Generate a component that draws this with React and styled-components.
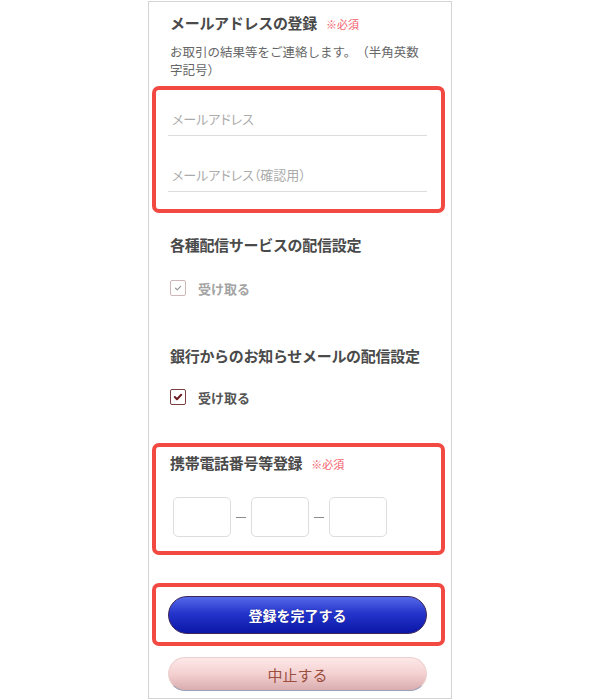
import React from "react";
import styled, { createGlobalStyle } from "styled-components";

const Global = createGlobalStyle`
  html, body { margin: 0; padding: 0; background: #fff; }
  body {
    font-family: "Noto Sans CJK JP", "Noto Sans", sans-serif;
    text-spacing-trim: space-all;
  }
  * { box-sizing: border-box; }
`;

const Page = styled.div`
  width: 600px;
  height: 700px;
  display: flex;
  justify-content: center;
  align-items: flex-start;
  padding-top: 1px;
  overflow: hidden;
`;

const Panel = styled.div`
  width: 304px;
  border: 1px solid #d4d4d4;
  padding: 0 6px 7px 3px;
  display: flex;
  flex-direction: column;
`;

const Box = styled.section`
  border-style: solid;
  border-color: ${(p) => (p.$highlight ? "#f24a43" : "transparent")};
  border-width: ${(p) => (p.$highlight ? "4px" : "0 4px")};
  border-radius: 7px;
  padding: ${(p) => p.$pad || "0"} 14px ${(p) => p.$padBottom || "0"} 12px;
  margin-top: ${(p) => p.$mt || 0}px;
  display: flex;
  flex-direction: column;
`;

const Title = styled.h2`
  margin: 0;
  margin-top: ${(p) => p.$mt || 0}px;
  padding-left: 2px;
  font-size: 15px;
  line-height: 20px;
  font-weight: 700;
  color: #4a4a4a;
  letter-spacing: -0.3px;
  display: flex;
  align-items: baseline;
`;

const Required = styled.span`
  font-size: 11px;
  line-height: 11px;
  font-weight: 400;
  color: #f3606c;
  margin-left: 9px;
  letter-spacing: 0;
`;

const Desc = styled.p`
  margin: 10px 0 0;
  padding-left: 2px;
  font-size: 12.5px;
  line-height: 18px;
  color: #666;
`;

const TextInput = styled.input`
  display: block;
  width: 100%;
  height: 35px;
  border: none;
  border-bottom: 1px solid #dcdcdc;
  padding: 0 0 0 4px;
  margin-top: ${(p) => p.$mt || 0}px;
  font-family: inherit;
  font-size: 13px;
  font-feature-settings: "palt";
  color: #333;
  background: transparent;
  outline: none;
  &::placeholder {
    color: #ababab;
  }
`;

const CheckRow = styled.label`
  display: flex;
  align-items: center;
  gap: 12px;
  height: 20px;
  padding-left: 2px;
  margin-top: ${(p) => p.$mt || 0}px;
  font-size: 13px;
  font-weight: 700;
  color: ${(p) => (p.$disabled ? "#a3a3a3" : "#555")};
`;

const CheckBox = styled.span`
  width: 16px;
  height: 16px;
  border: ${(p) => (p.$disabled ? "1px solid #cdb7b8" : "1.5px solid #7b3f40")};
  border-radius: 2px;
  background: #fff;
  display: flex;
  align-items: center;
  justify-content: center;
`;

const PhoneRow = styled.div`
  display: flex;
  align-items: center;
  margin: 24px 0 0 5px;
`;

const PhoneInput = styled.input`
  width: 58px;
  height: 40px;
  border: 1px solid #dddddd;
  border-radius: 5px;
  font-family: inherit;
  font-size: 14px;
  text-align: center;
  outline: none;
  background: #fff;
`;

const Dash = styled.span`
  width: 10px;
  height: 1px;
  background: #8a8a8a;
  margin: 0 5px;
`;

const PrimaryButton = styled.button`
  width: 100%;
  height: 38px;
  border-radius: 19px;
  border: 1px solid #3c2558;
  background: linear-gradient(to bottom, #5568e8 0%, #2535cc 45%, #0a16a6 100%);
  color: #fff;
  font-family: inherit;
  font-size: 14px;
  font-weight: 700;
  text-shadow: 0 0 1px rgba(0, 0, 40, 0.5);
  cursor: pointer;
`;

const CancelButton = styled.button`
  width: 100%;
  height: 34px;
  border-radius: 17px;
  border: 1px solid #ecd0d0;
  border-bottom: 1px solid #9aa0b8;
  background: linear-gradient(to bottom, #fde8e8 0%, #f4d0d0 50%, #d9adaf 100%);
  color: #9a4e3e;
  font-family: inherit;
  font-size: 15px;
  font-weight: 400;
  cursor: pointer;
`;

const Check = ({ disabled }) => (
  <svg width="10" height="8" viewBox="0 0 10 8" aria-hidden="true">
    <path
      d={disabled ? "M2.5 4.2 L4.3 5.8 L7.6 2.4" : "M1.8 4 L4 6.2 L8.2 1.8"}
      fill="none"
      stroke={disabled ? "#9a9a9a" : "#6e1c22"}
      strokeWidth={disabled ? 1.2 : 2}
      strokeLinecap="round"
      strokeLinejoin="round"
    />
  </svg>
);

export default function App() {
  return (
    <>
      <Global />
      <Page>
        <Panel>
          <Box $pad="11px">
            <Title>
              メールアドレスの登録<Required>※必須</Required>
            </Title>
            <Desc>お取引の結果等をご連絡します。（半角英数字記号）</Desc>
          </Box>

          <Box $highlight $mt={7} $pad="11px" $padBottom="17px">
            <TextInput type="email" placeholder="メールアドレス" />
            <TextInput $mt={21} type="email" placeholder="メールアドレス（確認用）" />
          </Box>

          <Box $mt={22}>
            <Title>各種配信サービスの配信設定</Title>
            <CheckRow $mt={23} $disabled>
              <CheckBox $disabled>
                <Check disabled />
              </CheckBox>
              受け取る
            </CheckRow>
            <Title $mt={48}>銀行からのお知らせメールの配信設定</Title>
            <CheckRow $mt={21}>
              <CheckBox>
                <Check />
              </CheckBox>
              受け取る
            </CheckRow>
          </Box>

          <Box $highlight $mt={36} $pad="6px" $padBottom="14px">
            <Title>
              携帯電話番号等登録<Required>※必須</Required>
            </Title>
            <PhoneRow>
              <PhoneInput type="tel" />
              <Dash />
              <PhoneInput type="tel" />
              <Dash />
              <PhoneInput type="tel" />
            </PhoneRow>
          </Box>

          <Box $highlight $mt={28} $pad="9px" $padBottom="8px">
            <PrimaryButton type="button">登録を完了する</PrimaryButton>
          </Box>

          <Box $mt={11}>
            <CancelButton type="button">中止する</CancelButton>
          </Box>
        </Panel>
      </Page>
    </>
  );
}
